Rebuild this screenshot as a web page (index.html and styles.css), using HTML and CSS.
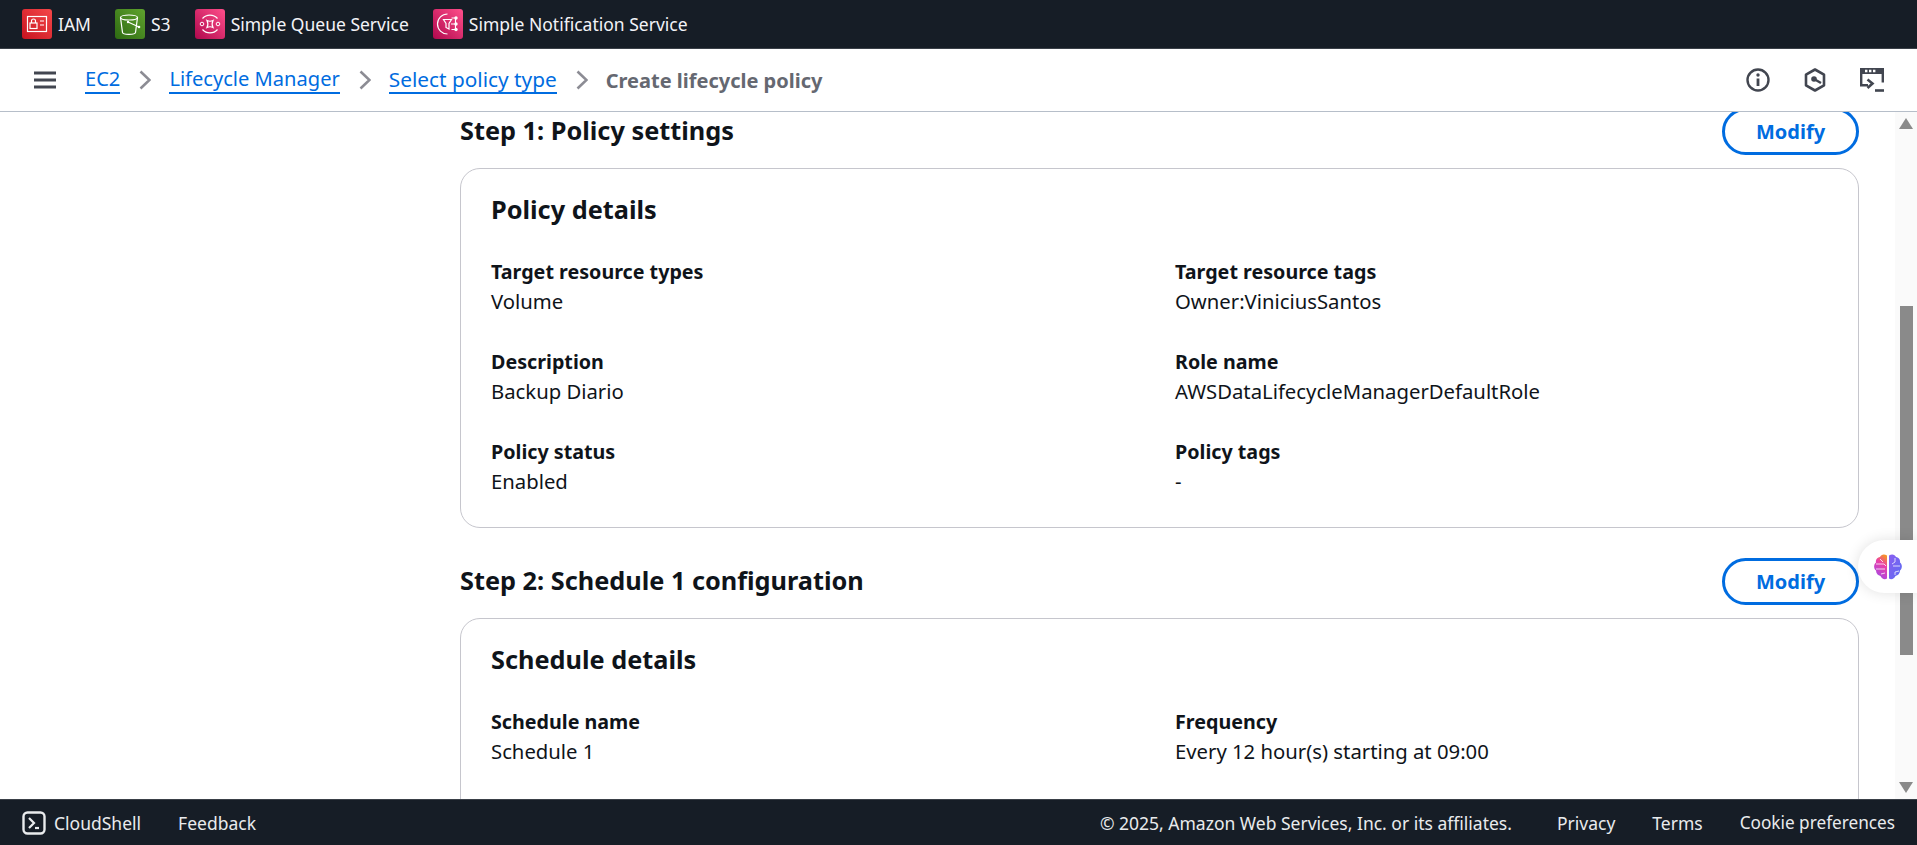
FILE: index.html
```html
<!DOCTYPE html>
<html lang="en">
<head>
  <meta charset="UTF-8">
  <title>Create lifecycle policy</title>
  <link rel="stylesheet" href="styles.css">
</head>
<body>
<div class="topnav">
  <a class="fav"><span class="svc red"><svg viewBox="0 0 30 30"><rect x="5.500" y="7.500" width="19" height="15" fill="none" stroke="#fff" stroke-width="1.200"/><rect x="8" y="14" width="7" height="5.500" fill="none" stroke="#fff" stroke-width="1.200"/><path d="M9.500 14v-2a2 2 0 0 1 4 0v2M18 12h4M18 16h4" fill="none" stroke="#fff" stroke-width="1.200"/></svg></span>IAM</a>
  <a class="fav"><span class="svc green"><svg viewBox="0 0 30 30"><ellipse cx="14" cy="8.500" rx="8.500" ry="2.500" fill="none" stroke="#fff" stroke-width="1.200"/><path d="M5.500 8.500l2 15c.3 2.500 12.700 2.500 13 0l2-15M13 13l11 5" fill="none" stroke="#fff" stroke-width="1.200"/><circle cx="13" cy="13" r="1.200" fill="#fff"/><circle cx="24" cy="18" r="1.300" fill="#fff"/></svg></span>S3</a>
  <a class="fav"><span class="svc pink"><svg viewBox="0 0 30 30"><path d="M7.500 9.500a10 10 0 0 1 15 0M7.500 20.500a10 10 0 0 0 15 0" fill="none" stroke="#fff" stroke-width="1.200"/><path d="M12 11.500c2 1 4 1 6 0-1 2-1 5 0 7-2-1-4-1-6 0 1-2 1-5 0-7z" fill="none" stroke="#fff" stroke-width="1.200"/><circle cx="7" cy="15" r="1.800" fill="none" stroke="#fff"/><circle cx="23" cy="15" r="1.800" fill="none" stroke="#fff"/></svg></span>Simple Queue Service</a>
  <a class="fav"><span class="svc pink"><svg viewBox="0 0 30 30"><path d="M14.500 5a10 10 0 0 0 0 20" fill="none" stroke="#fff" stroke-width="1.200"/><path d="M10.500 10.500h8l-2.500 4v5.500l-3-1.500v-4z" fill="none" stroke="#fff" stroke-width="1.200"/><path d="M18.500 9H22M18 15h4M18.500 20.500H22M22.500 9v11.500" fill="none" stroke="#fff" stroke-width="1.100"/><circle cx="23" cy="9" r="1.700" fill="#fff"/><circle cx="23" cy="15" r="1.700" fill="#fff"/><circle cx="23" cy="20.500" r="1.700" fill="#fff"/></svg></span>Simple Notification Service</a>
</div>

<div class="crumbbar">
  <svg class="menu" viewBox="0 0 22 18"><path d="M0 2h22M0 9h22M0 16h22" stroke="#424650" stroke-width="3"/></svg>
  <a class="crumb">EC2</a>
  <svg class="sep" viewBox="0 0 12 20"><path d="M1.500 1.500l9 8.500-9 8.500" fill="none" stroke="#8c8c94" stroke-width="2.600"/></svg>
  <a class="crumb">Lifecycle Manager</a>
  <svg class="sep" viewBox="0 0 12 20"><path d="M1.500 1.500l9 8.500-9 8.500" fill="none" stroke="#8c8c94" stroke-width="2.600"/></svg>
  <a class="crumb wide">Select policy type</a>
  <svg class="sep" viewBox="0 0 12 20"><path d="M1.500 1.500l9 8.500-9 8.500" fill="none" stroke="#8c8c94" stroke-width="2.600"/></svg>
  <span class="crumb-current">Create lifecycle policy</span>
  <div class="tools">
    <svg viewBox="0 0 24 24"><circle cx="12" cy="12" r="10.500" fill="none" stroke="#424650" stroke-width="2.400"/><path d="M12 10.500V18" stroke="#424650" stroke-width="2.800"/><circle cx="12" cy="7" r="1.700" fill="#424650"/></svg>
    <svg class="hex" viewBox="0 0 22 24"><path d="M11 1.500l9 5.200v10.600l-9 5.200-9-5.200V6.700z" fill="none" stroke="#424650" stroke-width="2.600" stroke-linejoin="round"/><circle cx="10" cy="11" r="2.800" fill="#424650"/><path d="M10 11l7 4" stroke="#424650" stroke-width="2.400"/></svg>
    <svg viewBox="0 0 24 24"><path d="M0 0h24v14.500h-2.400V6H2.400v10H8v2.400H0z" fill="#424650"/><path d="M5 1.800h2.400v2.400H5zM9 1.800h2.400v2.400H9zM13 1.800h2.400v2.400H13z" fill="#fff"/><path d="M7.500 11.500l5 4-5 4.500" fill="none" stroke="#424650" stroke-width="2.600"/><path d="M15 22.500h9" stroke="#424650" stroke-width="2.600"/></svg>
  </div>
</div>

<div class="middle">
  <div class="content">
    <section class="step">
      <div class="step-head">
        <h2>Step 1: Policy settings</h2>
        <button class="btn">Modify</button>
      </div>
      <div class="card">
        <h3>Policy details</h3>
        <div class="fields">
          <div class="field"><b>Target resource types</b><span>Volume</span></div>
          <div class="field"><b>Target resource tags</b><span>Owner:ViniciusSantos</span></div>
          <div class="field"><b>Description</b><span>Backup Diario</span></div>
          <div class="field"><b>Role name</b><span>AWSDataLifecycleManagerDefaultRole</span></div>
          <div class="field"><b>Policy status</b><span>Enabled</span></div>
          <div class="field"><b>Policy tags</b><span>-</span></div>
        </div>
      </div>
    </section>
    <section class="step">
      <div class="step-head">
        <h2>Step 2: Schedule 1 configuration</h2>
        <button class="btn">Modify</button>
      </div>
      <div class="card">
        <h3>Schedule details</h3>
        <div class="fields">
          <div class="field"><b>Schedule name</b><span>Schedule 1</span></div>
          <div class="field"><b>Frequency</b><span>Every 12 hour(s) starting at 09:00</span></div>
        </div>
      </div>
    </section>
  </div>
  <div class="scrollbar">
    <div class="arrow-up"></div>
    <div class="track"><div class="thumb"></div></div>
    <div class="arrow-down"></div>
  </div>
  <div class="brain">
    <svg viewBox="0 0 30 27">
      <defs>
        <linearGradient id="lobe-l" x1="0.700" y1="0" x2="0.300" y2="1"><stop offset="0" stop-color="#f5912a"/><stop offset=".35" stop-color="#ec3fa8"/><stop offset="1" stop-color="#a04be8"/></linearGradient>
        <linearGradient id="lobe-r" x1="0" y1="0" x2="1" y2="1"><stop offset="0" stop-color="#8a5ff0"/><stop offset="1" stop-color="#5c6cf2"/></linearGradient>
      </defs>
      <path d="M14 2.500C11 .5 8 1.500 7 4 4 4.500 2.500 7 3 9.500 .5 11.500.5 15.500 3 17.500c0 3 2 5 4.500 5.500 1 3 4.500 4 6.500 2.500z" fill="url(#lobe-l)"/>
      <path d="M16 2.500c3-2 6-1 7 1.500 3 .5 4.500 3 4 5.500 2.500 2 2.500 6 0 8 0 3-2 5-4.500 5.500-1 3-4.500 4-6.500 2.500z" fill="url(#lobe-r)"/>
      <path d="M3 11h8l2 2M3 16h9M7 6l3 3M8 21l4-1M22 5v4l-3 2M27 13h-7M26 18l-4 1v3" fill="none" stroke="#fff" stroke-width="1" opacity=".75"/>
    </svg>
  </div>
</div>

<div class="footer">
  <a class="shell"><svg viewBox="0 0 24 24"><rect x="1.500" y="1.500" width="21" height="21" rx="4" fill="none" stroke="#e9ebed" stroke-width="2.400"/><path d="M7 7l5 5-5 5" fill="none" stroke="#e9ebed" stroke-width="2.200"/><path d="M13 17h4" stroke="#e9ebed" stroke-width="2.200"/></svg>CloudShell</a>
  <a class="feedback">Feedback</a>
  <span class="copy">© 2025, Amazon Web Services, Inc. or its affiliates.</span>
  <a class="flink">Privacy</a>
  <a class="flink">Terms</a>
  <a class="flink cookie">Cookie preferences</a>
</div>
</body>
</html>
```

FILE: styles.css
```css
* {
  box-sizing: border-box;
}
body {
  font-family: "Noto Sans", Arial, sans-serif;
  color: #0f141a;
  background: #fff;
  display: flex;
  flex-direction: column;
  height: 100vh;
  margin: 0;
  overflow: hidden;
}
.topnav {
  background: #161d26;
  height: 49px;
  flex: none;
  display: flex;
  align-items: center;
  padding: 0 16px 1px 22px;
  gap: 24px;
  border-bottom: 1px solid #3a4048;
}
.fav {
  display: flex;
  align-items: center;
  gap: 6px;
  color: #f3f3f7;
  font-size: 17.500px;
}
.svc {
  width: 30px;
  height: 30px;
  border-radius: 3px;
  display: flex;
  align-items: center;
  justify-content: center;
}
.svc svg {
  width: 30px;
  height: 30px;
}
.red { background: linear-gradient(45deg, #c7131f, #f54749); }
.green { background: linear-gradient(45deg, #2e6a12, #5fa32e); }
.pink { background: linear-gradient(45deg, #b0084d, #ff4f8b); }

.crumbbar {
  height: 63px;
  flex: none;
  display: flex;
  align-items: center;
  padding: 0 33px 0 34px;
  border-bottom: 1px solid #b6bec9;
  font-size: 20px;
}
.menu {
  width: 22px;
  height: 18px;
  margin-right: 29px;
}
.crumb {
  color: #006ce0;
  border-bottom: 2px solid #006ce0;
  font-size: 20.100px;
  line-height: 26px;
}
.crumb.wide {
  font-size: 20.800px;
}
.sep {
  width: 12px;
  height: 20px;
  margin: 0 18px 0 19px;
}
.crumb-current {
  color: #656871;
  font-weight: 700;
}
.tools {
  margin-left: auto;
  display: flex;
  gap: 34px;
}
.tools svg {
  width: 24px;
  height: 24px;
}
.tools .hex {
  width: 22px;
}

.middle {
  flex: 1;
  min-height: 0;
  position: relative;
  display: flex;
  overflow: hidden;
}
.content {
  flex: 1;
  padding: 0 36px 0 460px;
  overflow: hidden;
}
.step {
  margin-bottom: 30px;
}
.step:first-child {
  margin-top: -4px;
}
.step-head {
  display: flex;
  justify-content: space-between;
  align-items: center;
  height: 47px;
  margin-bottom: 13px;
}
.step-head h2 {
  font-size: 25.300px;
  font-weight: 700;
  margin: 0 0 3px;
}
.btn {
  font-family: inherit;
  width: 137px;
  height: 47px;
  border: 3px solid #006ce0;
  border-radius: 24px;
  background: #fff;
  color: #006ce0;
  font-size: 20px;
  font-weight: 700;
}
.card {
  border: 1px solid #c6c6cd;
  border-radius: 20px;
  padding: 24px 30px 0;
  height: 360px;
}
.card h3 {
  font-size: 25.300px;
  font-weight: 700;
  margin: 0 0 32px;
  line-height: 32px;
}
.fields {
  display: grid;
  grid-template-columns: 684px 1fr;
  row-gap: 30px;
}
.field {
  font-size: 20.300px;
  line-height: 30px;
}
.field b, .field span {
  display: block;
}
.field b {
  font-size: 19.700px;
  font-weight: 700;
}
.field span {
  margin-top: -1px;
  margin-bottom: 1px;
}

.scrollbar {
  width: 22px;
  flex: none;
  background: #fafafa;
  display: flex;
  flex-direction: column;
  align-items: center;
}
.arrow-up {
  margin-top: 6px;
  border: 7px solid transparent;
  border-top: 0;
  border-bottom: 11px solid #8a8a8a;
}
.arrow-down {
  margin-bottom: 6px;
  border: 7px solid transparent;
  border-bottom: 0;
  border-top: 11px solid #8a8a8a;
}
.track {
  flex: 1;
  width: 100%;
  padding-top: 177px;
}
.thumb {
  background: #8a8a8a;
  height: 349px;
  margin: 0 4px 0 5px;
}
.brain {
  position: absolute;
  right: 0;
  top: 428px;
  width: 59px;
  height: 53px;
  background: #fff;
  border-radius: 27px 0 0 27px;
  box-shadow: 0 0 14px rgba(0,0,0,0.12);
  display: flex;
  align-items: center;
  padding-left: 15px;
}
.brain svg {
  width: 30px;
  height: 27px;
}

.footer {
  height: 46px;
  flex: none;
  background: #161d26;
  border-top: 1px solid #3a4048;
  display: flex;
  align-items: center;
  padding: 0 22px;
  color: #e9ebed;
  font-size: 17.500px;
}
.shell {
  display: flex;
  align-items: center;
  gap: 8px;
}
.shell svg {
  width: 24px;
  height: 24px;
}
.feedback {
  margin-left: 37px;
}
.copy {
  margin-left: auto;
  margin-right: 45px;
}
.flink {
  margin-left: 37px;
}
.copy + .flink {
  margin-left: 0;
}
.cookie {
  font-size: 17.200px;
}
```
